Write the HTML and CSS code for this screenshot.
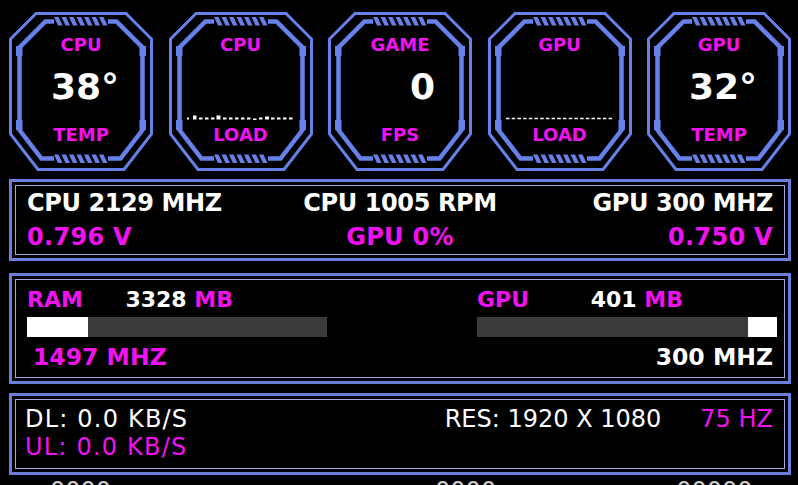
FILE: index.html
```html
<!DOCTYPE html>
<html lang="en">
<head>
<meta charset="utf-8">
<title>Monitor</title>
<link rel="stylesheet" href="styles.css">
</head>
<body>
<svg class="defs" width="0" height="0" aria-hidden="true">
  <defs>
    <symbol id="frame" viewBox="0 0 144 159">
      <polygon class="f-outer" points="27,1.5 117,1.5 142.5,27 142.5,122 115,157.5 29,157.5 1.5,122 1.5,27"/>
      <path class="f-inner" d="M45,9.5 H36.5 L10.5,35.5 V118 L32.5,146.5 H45 M99,146.5 H111.5 L133.5,118 V35.5 L107.5,9.5 H99"/>
      <g class="f-fill">
        <rect x="7" y="34" width="6.5" height="10"/>
        <rect x="7" y="108" width="6.5" height="10"/>
        <rect x="130.5" y="34" width="6.5" height="10"/>
        <rect x="130.5" y="108" width="6.5" height="10"/>
        <polygon points="45,5 49.5,5 53.5,13.5 49,13.5"/>
        <polygon points="52.5,5 57,5 61,13.5 56.5,13.5"/>
        <polygon points="60,5 64.5,5 68.5,13.5 64,13.5"/>
        <polygon points="67.5,5 72,5 76,13.5 71.5,13.5"/>
        <polygon points="75,5 79.5,5 83.5,13.5 79,13.5"/>
        <polygon points="82.5,5 87,5 91,13.5 86.5,13.5"/>
        <polygon points="90,5 94.5,5 98.5,13.5 94,13.5"/>
        <polygon points="45,142.5 49.5,142.5 53.5,151 49,151"/>
        <polygon points="52.5,142.5 57,142.5 61,151 56.5,151"/>
        <polygon points="60,142.5 64.5,142.5 68.5,151 64,151"/>
        <polygon points="67.5,142.5 72,142.5 76,151 71.5,151"/>
        <polygon points="75,142.5 79.5,142.5 83.5,151 79,151"/>
        <polygon points="82.5,142.5 87,142.5 91,151 86.5,151"/>
        <polygon points="90,142.5 94.5,142.5 98.5,151 94,151"/>
      </g>
    </symbol>
  </defs>
</svg>

<main class="dash">
  <section class="gauges">
    <div class="gauge">
      <svg class="frame" viewBox="0 0 144 159"><use href="#frame"/></svg>
      <div class="g-label">CPU</div>
      <div class="g-mid"><div class="g-value">38°</div></div>
      <div class="g-label">TEMP</div>
    </div>
    <div class="gauge">
      <svg class="frame" viewBox="0 0 144 159"><use href="#frame"/></svg>
      <div class="g-label">CPU</div>
      <div class="g-mid">
        <svg class="spark" viewBox="0 0 106 6">
          <g class="spark-dots">
            <rect x="0" y="3.5" width="2" height="2"/>
            <rect x="6" y="1.5" width="3.5" height="4"/>
            <rect x="12" y="3.5" width="3.5" height="2"/>
            <rect x="18" y="3.5" width="3.5" height="2"/>
            <rect x="24" y="3.5" width="3.5" height="2"/>
            <rect x="29.5" y="1.5" width="4" height="4"/>
            <rect x="36" y="3.5" width="3.5" height="2"/>
            <rect x="42" y="3.5" width="3.5" height="2"/>
            <rect x="48" y="3.5" width="3.5" height="2"/>
            <rect x="54" y="3.5" width="3.5" height="2"/>
            <rect x="60" y="3.5" width="3.5" height="2"/>
            <rect x="66" y="4.5" width="3.5" height="1.5"/>
            <rect x="72" y="3.5" width="3.5" height="2"/>
            <rect x="78" y="2.5" width="4" height="3"/>
            <rect x="84" y="3.5" width="3.5" height="2"/>
            <rect x="90" y="3.5" width="3.5" height="2"/>
            <rect x="96" y="3.5" width="3.5" height="2"/>
            <rect x="102" y="3.5" width="3.5" height="2"/>
          </g>
        </svg>
      </div>
      <div class="g-label">LOAD</div>
    </div>
    <div class="gauge">
      <svg class="frame" viewBox="0 0 144 159"><use href="#frame"/></svg>
      <div class="g-label">GAME</div>
      <div class="g-mid"><div class="g-value right">0</div></div>
      <div class="g-label">FPS</div>
    </div>
    <div class="gauge">
      <svg class="frame" viewBox="0 0 144 159"><use href="#frame"/></svg>
      <div class="g-label">GPU</div>
      <div class="g-mid">
        <svg class="spark" viewBox="0 0 106 6">
          <line class="spark-line" x1="0" y1="4.5" x2="106" y2="4.5"/>
        </svg>
      </div>
      <div class="g-label">LOAD</div>
    </div>
    <div class="gauge">
      <svg class="frame" viewBox="0 0 144 159"><use href="#frame"/></svg>
      <div class="g-label">GPU</div>
      <div class="g-mid"><div class="g-value">32°</div></div>
      <div class="g-label">TEMP</div>
    </div>
  </section>

  <section class="panel p1">
    <div class="panel-in clocks">
      <div class="w tight">CPU 2129 MHZ</div>
      <div class="w tight c">CPU 1005 RPM</div>
      <div class="w tight r">GPU 300 MHZ</div>
      <div class="m">0.796 V</div>
      <div class="m c">GPU 0%</div>
      <div class="m r">0.750 V</div>
    </div>
  </section>

  <section class="panel p2">
    <div class="panel-in mem">
      <div class="mem-col">
        <div class="mem-head"><span class="m">RAM</span><span><span class="w">3328</span> <span class="m">MB</span></span></div>
        <div class="bar"><div class="bar-fill" style="width:20.3%"></div></div>
        <div class="mem-foot m">1497 MHZ</div>
      </div>
      <div class="mem-col">
        <div class="mem-head"><span class="m">GPU</span><span><span class="w">401</span> <span class="m">MB</span></span></div>
        <div class="bar rtl"><div class="bar-fill" style="width:9.7%"></div></div>
        <div class="mem-foot right w">300 MHZ</div>
      </div>
    </div>
  </section>

  <section class="panel p3">
    <div class="panel-in net">
      <div class="net-col">
        <div class="w dl">DL: 0.0 KB/S</div>
        <div class="m dl">UL: 0.0 KB/S</div>
      </div>
      <div class="res"><span class="w">RES: 1920 X 1080</span><span class="m">75 HZ</span></div>
    </div>
  </section>

  <div class="peek"><span class="pk1">0000</span><span class="pk2">0000</span><span class="pk3">00000</span></div>
</main>
</body>
</html>
```

FILE: styles.css
```css
html, body {
  margin: 0;
  padding: 0;
  background: #000;
  overflow: hidden;
}

body {
  font-family: "DejaVu Sans", "Liberation Sans", sans-serif;
  color: #fff;
}

.defs {
  position: absolute;
  width: 0;
  height: 0;
  overflow: hidden;
}

.dash {
  width: 782px;
  padding: 12px 0 0 9px;
}

.w { color: #ffffff; }
.m { color: #f012f0; }

/* ---------- gauges ---------- */
.gauges {
  display: flex;
  justify-content: space-between;
  height: 159px;
}

.gauge {
  position: relative;
  width: 144px;
  height: 159px;
  box-sizing: border-box;
  padding-top: 23px;
  display: flex;
  flex-direction: column;
}

.frame {
  position: absolute;
  left: 0;
  top: 0;
  width: 144px;
  height: 159px;
}

.f-outer {
  fill: none;
  stroke: #6681ea;
  stroke-width: 3;
}

.f-inner {
  fill: none;
  stroke: #6681ea;
  stroke-width: 4.5;
}

.f-fill { fill: #6681ea; }

.g-label {
  position: relative;
  font-weight: bold;
  font-size: 18px;
  line-height: 20px;
  color: #f012f0;
  text-align: center;
}

.g-mid {
  position: relative;
  height: 56px;
  margin-top: 14px;
  display: flex;
  flex-direction: column;
}

.g-value {
  font-weight: bold;
  font-size: 36px;
  line-height: 36px;
  text-align: center;
  padding-left: 8px;
}

.g-value.right {
  text-align: right;
  padding-left: 0;
  padding-right: 37px;
}

.spark {
  display: block;
  width: 106px;
  height: 6px;
  margin: auto 0 5px 18px;
}

.spark-dots { fill: #fff; }

.spark-line {
  stroke: #fff;
  stroke-width: 1.4;
  stroke-dasharray: 3.5 2.2;
}

/* ---------- panels ---------- */
.panel {
  border: 3px solid #6a7ed8;
  padding: 3px;
}

.panel-in {
  border: 1px solid #a3a9e4;
}

.p1 { margin-top: 8px; }
.p2 { margin-top: 12px; }
.p3 { margin-top: 9px; }

.clocks {
  display: grid;
  grid-template-columns: 1fr auto 1fr;
  padding: 0 11px;
  font-weight: bold;
  font-size: 24px;
  line-height: 34px;
  letter-spacing: 0.3px;
}

.clocks .tight { letter-spacing: -0.4px; }
.clocks .c { text-align: center; }
.clocks .r { text-align: right; }

.mem {
  display: flex;
  justify-content: space-between;
  padding: 7px 7px 7px 11px;
}

.mem-col { width: 300px; }

.mem-head {
  display: flex;
  justify-content: space-between;
  width: 206px;
  font-weight: bold;
  font-size: 22px;
  line-height: 26px;
}

.bar {
  height: 20px;
  margin-top: 4px;
  background: #3b3b3b;
  display: flex;
}

.bar.rtl { justify-content: flex-end; }

.bar-fill {
  height: 100%;
  background: #fff;
}

.mem-foot {
  margin-top: 7px;
  padding-left: 6px;
  font-weight: bold;
  font-size: 23.5px;
  line-height: 26px;
}

.mem-foot.right {
  text-align: right;
  padding-left: 0;
  padding-right: 4px;
}

.net {
  display: flex;
  justify-content: space-between;
  padding: 5px 11px 7px 9px;
  font-size: 24px;
  line-height: 28px;
}

.dl { letter-spacing: 1.2px; }

.res {
  display: flex;
  gap: 39px;
}

.peek {
  display: flex;
  margin-top: 2px;
  font-size: 24px;
  line-height: 28px;
  color: #cfcfcf;
}

.pk1 { margin-left: 41px; }
.pk2 { margin-left: 324px; }
.pk3 { margin-left: 180px; }
```
